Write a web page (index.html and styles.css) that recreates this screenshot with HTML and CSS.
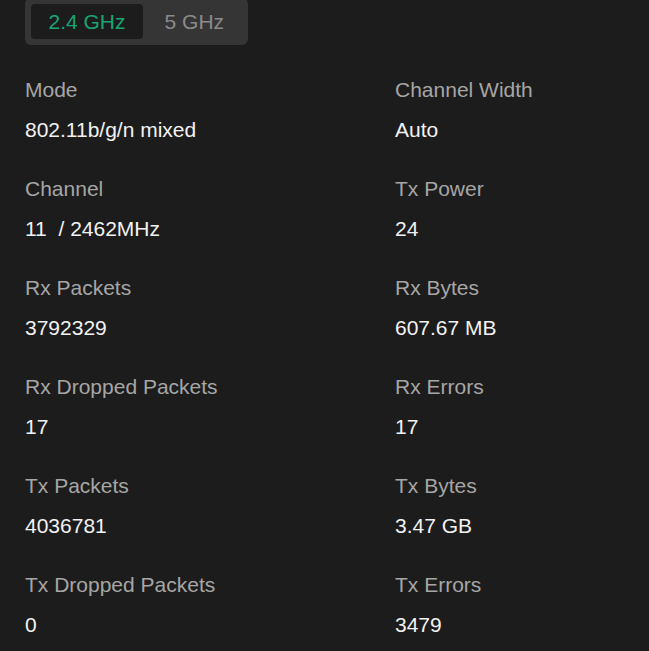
FILE: index.html
```html
<!DOCTYPE html>
<html lang="en">
  <head>
    <meta charset="UTF-8" />
    <meta name="viewport" content="width=device-width, initial-scale=1.0" />
    <title>Wireless Status</title>
    <link rel="stylesheet" href="styles.css">
  </head>
  <body>
    <div class="panel">
      <div class="band-tabs">
        <button class="band-tab active">2.4 GHz</button>
        <button class="band-tab">5 GHz</button>
      </div>

      <div class="stats">
        <div class="stat">
          <div class="stat-label">Mode</div>
          <div class="stat-value">802.11b/g/n mixed</div>
        </div>
        <div class="stat">
          <div class="stat-label">Channel Width</div>
          <div class="stat-value">Auto</div>
        </div>
        <div class="stat">
          <div class="stat-label">Channel</div>
          <div class="stat-value">11&nbsp; / 2462MHz</div>
        </div>
        <div class="stat">
          <div class="stat-label">Tx Power</div>
          <div class="stat-value">24</div>
        </div>
        <div class="stat">
          <div class="stat-label">Rx Packets</div>
          <div class="stat-value">3792329</div>
        </div>
        <div class="stat">
          <div class="stat-label">Rx Bytes</div>
          <div class="stat-value">607.67 MB</div>
        </div>
        <div class="stat">
          <div class="stat-label">Rx Dropped Packets</div>
          <div class="stat-value">17</div>
        </div>
        <div class="stat">
          <div class="stat-label">Rx Errors</div>
          <div class="stat-value">17</div>
        </div>
        <div class="stat">
          <div class="stat-label">Tx Packets</div>
          <div class="stat-value">4036781</div>
        </div>
        <div class="stat">
          <div class="stat-label">Tx Bytes</div>
          <div class="stat-value">3.47 GB</div>
        </div>
        <div class="stat">
          <div class="stat-label">Tx Dropped Packets</div>
          <div class="stat-value">0</div>
        </div>
        <div class="stat">
          <div class="stat-label">Tx Errors</div>
          <div class="stat-value">3479</div>
        </div>
      </div>
    </div>
  </body>
</html>
```

FILE: styles.css
```css
html,
body {
  margin: 0;
  background-color: #1c1c1c;
}

body {
  font-family: "Liberation Sans", Arial, sans-serif;
  font-size: 21px;
  line-height: 24px;
  overflow: hidden;
}

.panel {
  padding: 0 0 0 25px;
}

.band-tabs {
  display: inline-flex;
  gap: 4px;
  margin-top: -2px;
  padding: 6px;
  background: #353535;
  border-radius: 6px;
}

.band-tab {
  font: inherit;
  line-height: 24px;
  padding: 5.5px 17.5px;
  border: none;
  border-radius: 4px;
  background: transparent;
  color: #8a8a8a;
  cursor: pointer;
}

.band-tab.active {
  background: #1c1c1c;
  color: #17a673;
}

.stats {
  display: grid;
  grid-template-columns: 370px 1fr;
  row-gap: 35px;
  margin-top: 33px;
}

.stat-label {
  color: #a6a6a6;
  margin-bottom: 16px;
}

.stat-value {
  color: #f2f2f2;
}
```
